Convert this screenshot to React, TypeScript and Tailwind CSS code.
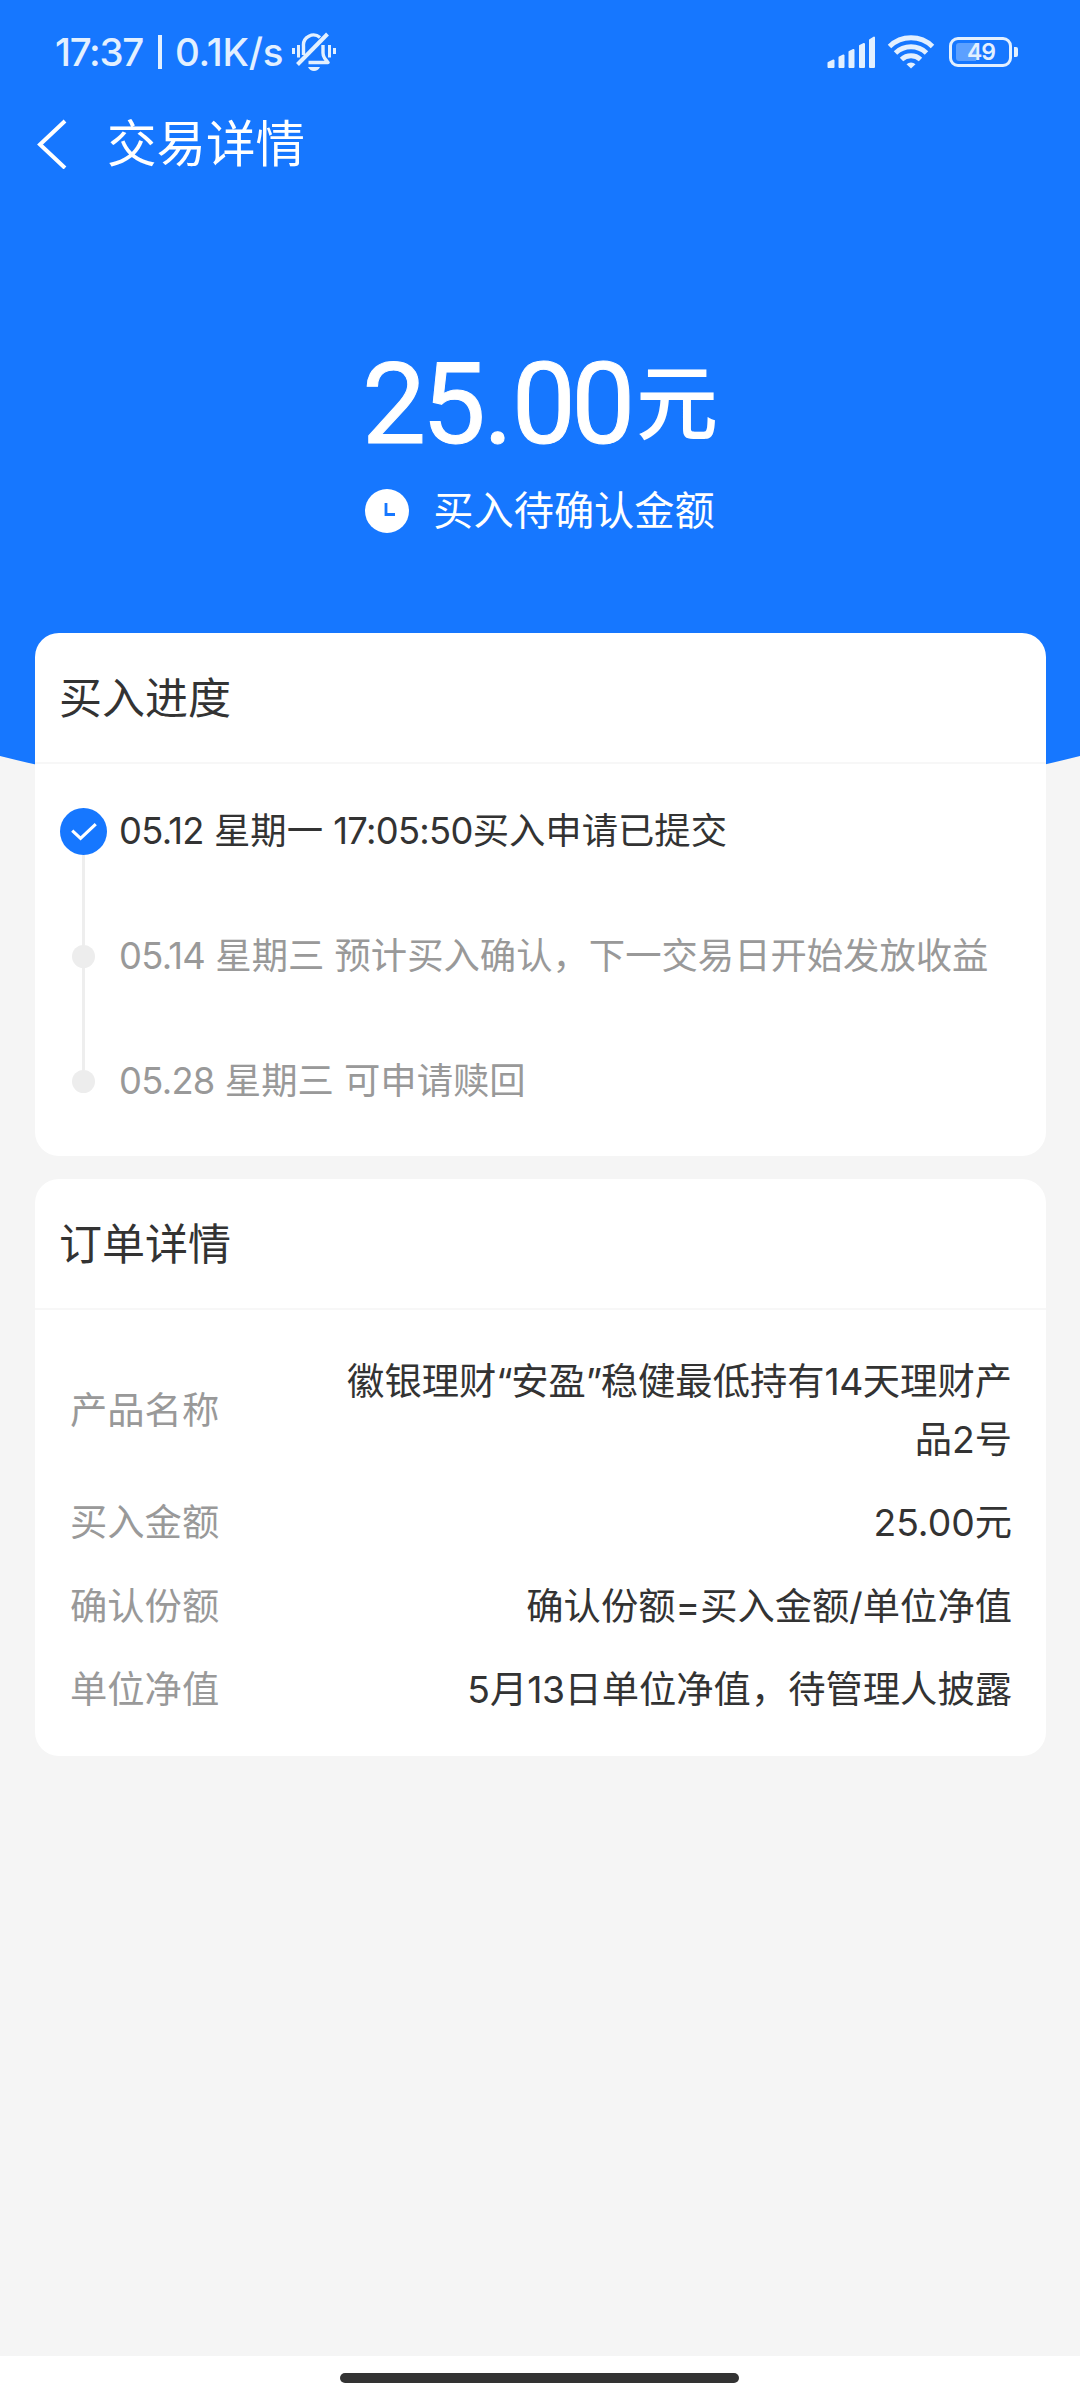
import { clsx } from 'clsx';

const steps = [
  { text: '05.12 星期一 17:05:50买入申请已提交', done: true },
  { text: '05.14 星期三 预计买入确认，下一交易日开始发放收益', done: false },
  { text: '05.28 星期三 可申请赎回', done: false },
];

const details = [
  { label: '产品名称', value: '徽银理财“安盈”稳健最低持有14天理财产品2号' },
  { label: '买入金额', value: '25.00元' },
  { label: '确认份额', value: '确认份额=买入金额/单位净值' },
  { label: '单位净值', value: '5月13日单位净值，待管理人披露' },
];

function MuteIcon() {
  return (
    <svg width="45" height="40" viewBox="0 0 45 40" fill="none" stroke="currentColor" strokeWidth="3.4">
      <path d="M1.500 16v6M6.500 13v12.500M37.500 13v12.500M42.500 16v6" strokeWidth="3" />
      <path d="M11.500 23V14a10 10 0 0 1 16.500-8.500M31 13v8q0 2.500 1.500 5l3.500 4.500H16.500" strokeLinejoin="round" />
      <path d="M5.500 32.500L35.500 2" strokeWidth="4" />
      <path d="M16 35h12q-2 4-6 4t-6-4z" fill="currentColor" stroke="none" />
    </svg>
  );
}

function SignalIcon() {
  return (
    <svg width="50" height="34" viewBox="0 0 50 34" fill="currentColor" stroke="currentColor" strokeWidth="2" strokeLinejoin="round">
      <path d="M1.500 28l5-2.500v6.500h-5zM12.500 22.500l4-2v11.500h-4zM22.500 17l4-2v17h-4zM33 11l4-2v23h-4zM43 5l4-2.500v29.500h-4z" />
    </svg>
  );
}

function WifiIcon() {
  return (
    <svg width="48" height="36" viewBox="0 0 48 36" fill="none" stroke="currentColor" strokeWidth="5">
      <path d="M2.500 12.500a31 31 0 0 1 43 0" />
      <path d="M8.500 19a22.500 22.500 0 0 1 31 0" />
      <path d="M14.500 25.500a14 14 0 0 1 19 0" />
      <path d="M24 34.500l-4.500-4.300a6.500 6.500 0 0 1 9 0z" fill="currentColor" stroke="none" />
    </svg>
  );
}

function Battery() {
  return (
    <div className="flex items-center gap-[2px]">
      <div className="relative flex h-[30px] w-[63px] items-center rounded-[9px] border-[3px] border-current">
        <div className="ml-[4px] h-[18px] w-[20px] rounded-l-[3px] bg-white/30" />
        <span className="absolute inset-0 flex items-center justify-center pl-[1px] text-[23px] font-semibold leading-none tracking-[-1px]">49</span>
      </div>
      <div className="h-[10px] w-[4px] rounded-r-[2px] bg-current" />
    </div>
  );
}

function StatusBar() {
  return (
    <div className="flex h-[104px] items-center justify-between pl-[55px] pr-[62px] text-[#e3f0ff]">
      <div className="flex items-center text-[38.500px] font-medium leading-none">
        <span className="tracking-[-1.300px]">17:37</span>
        <span className="ml-[15px] mr-[13px] h-[34px] w-[4px] bg-current" />
        <span className="mr-[9px] tracking-[-0.200px]">0.1K/s</span>
        <MuteIcon />
      </div>
      <div className="flex items-center">
        <SignalIcon />
        <div className="ml-[10px] mr-[14px]">
          <WifiIcon />
        </div>
        <Battery />
      </div>
    </div>
  );
}

// numbers with a 1 and curly quotes are set tighter than the rest of the line
function Value({ text }: { text: string }) {
  return (
    <>
      {text.split(/(\d*1\d*|[“”])/).map((part, i) => {
        if (i % 2 === 0) return part;
        return (
          <span key={i} className={/\d/.test(part) ? 'tracking-[-0.500px]' : 'tracking-[-1.500px]'}>{part}</span>
        );
      })}
    </>
  );
}

function StepText({ text }: { text: string }) {
  return (
    <>
      {text.split(/([\d.:]+)/).map((part, i) => (i % 2 ? <span key={i} className="tracking-[-0.700px]">{part}</span> : part))}
    </>
  );
}

function CardTitle({ children }: { children: string }) {
  return (
    <h2 className="h-[131px] border-b-2 border-[#f7f7f7] pl-[24px] text-[43px] leading-[131px] text-[#333]">{children}</h2>
  );
}

export default function App() {
  return (
    <div className="flex h-[2400px] w-[1080px] flex-col bg-[#f5f5f5] font-[Inter,'Noto_Sans_CJK_SC',sans-serif]">
      <header className="h-[756px] shrink-0 bg-[#1677ff] text-white">
        <StatusBar />
        <div className="flex h-[80px] items-center pl-[36px]">
          <svg width="32" height="50" viewBox="0 0 32 50" fill="none" stroke="currentColor" strokeWidth="4">
            <path d="M29 2L4 25.500L29 49" />
          </svg>
          <h1 className="ml-[39px] text-[49.500px] leading-[80px]">交易详情</h1>
        </div>
        <div className="mt-[165px] flex h-[110px] justify-center leading-[110px]">
          <span className="font-[Roboto] text-[114px] tracking-[-4.500px] [-webkit-text-stroke:1px_#fff]">
            25<span className="ml-[2px] mr-[3px]">.</span>00
          </span>
          <span className="ml-[5px] text-[82px] font-medium leading-[109px]">元</span>
        </div>
        <div className="mt-[22px] flex h-[60px] items-center justify-center">
          <svg width="44" height="44" viewBox="0 0 44 44">
            <circle cx="22" cy="22" r="22" fill="#fff" />
            <path d="M21 14v11.500h9" fill="none" stroke="#1677ff" strokeWidth="2.800" />
          </svg>
          <span className="ml-[24px] text-[40.200px] leading-[60px]">买入待确认金额</span>
        </div>
      </header>
      <svg className="block h-[68px] w-full shrink-0" viewBox="0 0 1080 68" fill="#1677ff">
        <path d="M0 0H1080Q540 135 0 0z" />
      </svg>

      <main className="-mt-[191px] flex flex-1 flex-col gap-[23px] pl-[35px] pr-[34px]">
        <section className="h-[523px] rounded-[24px] bg-white">
          <CardTitle>买入进度</CardTitle>
          <ul className="pl-[25px] pt-[5px]">
            {steps.map((step, i) => (
              <li key={step.text} className="relative flex h-[125px] items-center">
                {i < steps.length - 1 && <span className="absolute left-[22px] top-1/2 h-[125px] w-[3px] bg-[#eee]" />}
                <span className="relative flex w-[47px] justify-center">
                  {step.done ? (
                    <svg width="47" height="47" viewBox="0 0 48 48">
                      <circle cx="24" cy="24" r="24" fill="#1677ff" />
                      <path d="M12.500 23l8.500 8L36.500 16.500" fill="none" stroke="#fff" strokeWidth="3.200" />
                    </svg>
                  ) : (
                    <span className="h-[23px] w-[23px] rounded-full bg-[#ededed]" />
                  )}
                </span>
                <span className={clsx('ml-[12px] whitespace-nowrap text-[36.350px]', step.done ? 'text-[#333]' : 'text-[#999]')}>
                  <StepText text={step.text} />
                </span>
              </li>
            ))}
          </ul>
        </section>

        <section className="h-[577px] rounded-[24px] bg-white">
          <CardTitle>订单详情</CardTitle>
          <dl className="flex flex-col gap-[26px] pl-[35px] pr-[34px] pt-[43px] text-[37.300px] leading-[57.500px]">
            {details.map((item) => (
              <div key={item.label} className="flex items-center justify-between">
                <dt className="text-[#999]">{item.label}</dt>
                <dd className="w-[675px] text-right text-[#333]">
                  <Value text={item.value} />
                </dd>
              </div>
            ))}
          </dl>
        </section>
      </main>

      <footer className="flex h-[44px] shrink-0 justify-center bg-white pr-[2px] pt-[17px]">
        <div className="h-[10px] w-[399px] rounded-full bg-[#333]" />
      </footer>
    </div>
  );
}
